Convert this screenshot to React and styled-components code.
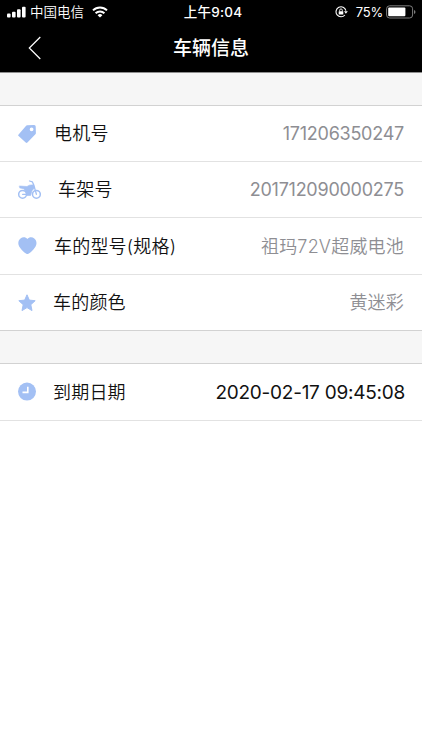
import React from 'react';
import styled, { createGlobalStyle, css } from 'styled-components';

const GlobalStyle = createGlobalStyle`
    * {
        box-sizing: border-box;
    }
    body {
        margin: 0;
        background: #fff;
        color: #111;
        font-family: Inter, "Noto Sans CJK SC", sans-serif;
        -webkit-font-smoothing: antialiased;
    }
`;

const Page = styled.div`
    display: flex;
    flex-direction: column;
    width: 100%;
    height: 750px;
    overflow: hidden;
`;

const Top = styled.header`
    height: 73px;
    background: #000;
    border-bottom: 1px solid #8e8e8e;
    color: #fff;
`;

const StatusBar = styled.div`
    display: grid;
    grid-template-columns: 1fr auto 1fr;
    align-items: center;
    height: 24px;
    padding: 0 6px 0 7px;
    font-size: 13px;
    line-height: 24px;
    svg {
        display: block;
    }
`;

const StatusGroup = styled.div`
    display: flex;
    align-items: center;
    ${props =>
        props.$end && css`
            justify-content: flex-end;
        `}
`;

const Carrier = styled.span`
    margin: 0 8px 0 4px;
    font-size: 13.5px;
    font-weight: 350;
`;

const Clock = styled.span`
    padding-left: 3px;
    font-size: 13.5px;
    font-weight: 500;
    letter-spacing: 0.25px;
`;

const Percent = styled.span`
    margin: 0 3px 0 8px;
    letter-spacing: -0.2px;
`;

const TitleBar = styled.div`
    display: grid;
    grid-template-columns: 1fr auto 1fr;
    align-items: center;
    height: 48px;
    padding: 0 28px;
`;

const BackButton = styled.button`
    display: block;
    width: 14px;
    height: 24px;
    padding: 0;
    border: 0;
    background: none;
    color: #fff;
    svg {
        display: block;
    }
`;

const Title = styled.h1`
    margin: 0;
    padding-top: 2px;
    font-size: 19px;
    font-weight: 500;
    line-height: 46px;
`;

const Gap = styled.div`
    height: 33px;
    background: #f6f6f6;
    border-bottom: 1px solid #d2d2d2;
`;

const List = styled.ul`
    margin: 0;
    padding: 0;
    list-style-type: none;
`;

const Row = styled.li`
    display: flex;
    align-items: center;
    height: ${props => props.$height || 56}px;
    padding: 0 18px;
    border-bottom: 1px solid ${props => (props.$last ? '#d2d2d2' : '#e2e2e2')};
    svg {
        display: block;
        flex: none;
    }
`;

const Label = styled.span`
    margin-left: 17px;
    padding-top: 1px;
    font-size: 18px;
    font-weight: 350;
    line-height: 26px;
    letter-spacing: 0.2px;
    white-space: nowrap;
`;

const Value = styled.span`
    margin-left: auto;
    padding-top: 1px;
    font-size: 18px;
    font-weight: ${props => (props.$number ? 400 : 350)};
    line-height: 26px;
    white-space: nowrap;
    color: #8e8e93;
    letter-spacing: ${props => (props.$number ? -0.25 : 0.2)}px;
    ${props =>
        props.$dark && css`
            margin-right: -1px;
            font-size: 19px;
            color: #111;
        `}
`;

const BLUE = '#a3c0f4';

const Signal = () => (
    <svg width="19" height="12" viewBox="0 0 19 12" fill="#fff">
        <rect x="0" y="7.5" width="3.6" height="4" rx="1" />
        <rect x="5" y="5.7" width="3.6" height="5.8" rx="1" />
        <rect x="10" y="3.3" width="3.6" height="8.2" rx="1" />
        <rect x="15" y="0.8" width="3.6" height="10.7" rx="1" />
    </svg>
);

const Wifi = () => (
    <svg width="16" height="12" viewBox="0 0 16 12" fill="none" stroke="#fff" strokeWidth="2">
        <path d="M1 4.4a10 10 0 0 1 14 0" />
        <path d="M3.6 7.3a6.2 6.2 0 0 1 8.8 0" />
        <path d="M8 11.6 5.6 9.2a3.4 3.4 0 0 1 4.8 0z" fill="#fff" stroke="none" />
    </svg>
);

const RotationLock = () => (
    <svg width="13" height="12" viewBox="0 0 13 12" fill="none" stroke="#fff">
        <path d="M9.9 9A5 5 0 1 1 10.9 4.6" strokeWidth="1.1" />
        <path d="m9 5.2 3.8 0-1.9 2.5z" fill="#fff" stroke="none" />
        <rect x="3.7" y="5.2" width="4.6" height="3.4" rx="0.4" fill="#fff" stroke="none" />
        <path d="M4.7 5.4V4.2a1.3 1.3 0 0 1 2.6 0v1.2" strokeWidth="0.9" />
    </svg>
);

const Battery = () => (
    <svg width="30" height="14" viewBox="0 0 30 14">
        <rect x="0.6" y="0.8" width="26" height="12.2" rx="3" fill="none" stroke="#7d7d7d" />
        <rect x="2.2" y="2.5" width="17.2" height="8.8" rx="1" fill="#fff" />
        <path d="M28 4.9q1.5.6 1.5 2t-1.5 2z" fill="#7d7d7d" />
    </svg>
);

const Back = () => (
    <svg width="14" height="24" viewBox="0 0 14 24" fill="none" stroke="#fff" strokeWidth="1.2">
        <path d="M12.3 1 1.3 12l11 11" />
    </svg>
);

const Tag = () => (
    <svg width="19" height="20" viewBox="0 0 19 20">
        <path
            fill={BLUE}
            fillRule="evenodd"
            d="M9.2 1.3 16 1a1.6 1.6 0 0 1 1.7 1.6l.2 6.5q0 .7-.5 1.2l-8 8.2q-.8.8-1.7 0L.6 12q-.9-.8 0-1.6l7.3-8.5q.5-.6 1.3-.6ZM13.6 3.4a1.9 1.9 0 1 0 0 3.8 1.9 1.9 0 0 0 0-3.8Z"
        />
    </svg>
);

const Motorbike = () => (
    <svg width="23" height="20" viewBox="0 0 23 20" fill="none" stroke={BLUE} strokeLinecap="round" strokeLinejoin="round">
        <circle cx="4.6" cy="14.3" r="3.9" strokeWidth="1.5" />
        <circle cx="18.4" cy="14.3" r="3.9" strokeWidth="1.5" />
        <path d="M4.6 14.3H8M11.5 1l2.9.9 1.4 3.2 2.6 9.200" strokeWidth="1.3" />
        <path d="M1.6 6 9 6.500l2.400-1.300 4.200-.4 1 3-2.600 3-1.400 4.700H9L7.500 11 5.600 8.700 2 8z" fill={BLUE} strokeWidth="0.6" />
    </svg>
);

const Heart = () => (
    <svg width="19" height="20" viewBox="0 0 19 20">
        <path
            fill={BLUE}
            d="M9.400 3C11 .9 14.200.7 16.300 2.400c2.800 2.300 2.800 6 .6 9-1.800 2.600-4.400 5-6.500 6.400q-1 .6-2 0C6.300 16.400 3.700 14 1.900 11.400-.3 8.400-.3 4.700 2.500 2.400 4.600.7 7.800.9 9.400 3Z"
        />
    </svg>
);

const Star = () => (
    <svg width="18" height="20" viewBox="0 0 18 20">
        <path
            fill={BLUE}
            stroke={BLUE}
            strokeLinejoin="round"
            d="m9 1.800 2.300 5.300 5.900.6-4.400 4 1.200 5.900-5-3-5 3 1.200-5.900-4.400-4 5.900-.6z"
        />
    </svg>
);

const ClockIcon = () => (
    <svg width="18" height="20" viewBox="0 0 18 20">
        <circle cx="9" cy="9.6" r="9" fill={BLUE} />
        <path d="M9.8 4.8v5.600H4.500" fill="none" stroke="#fff" strokeWidth="1.6" />
    </svg>
);

const vehicle = [
    { icon: <Tag />, label: '电机号', value: '171206350247', number: true },
    { icon: <Motorbike />, label: '车架号', value: '201712090000275', number: true },
    { icon: <Heart />, label: '车的型号(规格)', value: '祖玛72V超威电池', height: 57 },
    { icon: <Star />, label: '车的颜色', value: '黄迷彩' },
];

const App = () => (
    <Page>
        <GlobalStyle />
        <Top>
            <StatusBar>
                <StatusGroup>
                    <Signal />
                    <Carrier>中国电信</Carrier>
                    <Wifi />
                </StatusGroup>
                <Clock>上午9:04</Clock>
                <StatusGroup $end>
                    <RotationLock />
                    <Percent>75%</Percent>
                    <Battery />
                </StatusGroup>
            </StatusBar>
            <TitleBar>
                <BackButton aria-label="返回"><Back /></BackButton>
                <Title>车辆信息</Title>
            </TitleBar>
        </Top>
        <Gap />
        <List>
            {vehicle.map((item, i) => (
                <Row key={item.label} $height={item.height} $last={i === vehicle.length - 1}>
                    {item.icon}
                    <Label>{item.label}</Label>
                    <Value $number={item.number}>{item.value}</Value>
                </Row>
            ))}
        </List>
        <Gap />
        <List>
            <Row $height={57}>
                <ClockIcon />
                <Label>到期日期</Label>
                <Value $dark $number>2020-02-17 09:45:08</Value>
            </Row>
        </List>
    </Page>
);

export default App;
